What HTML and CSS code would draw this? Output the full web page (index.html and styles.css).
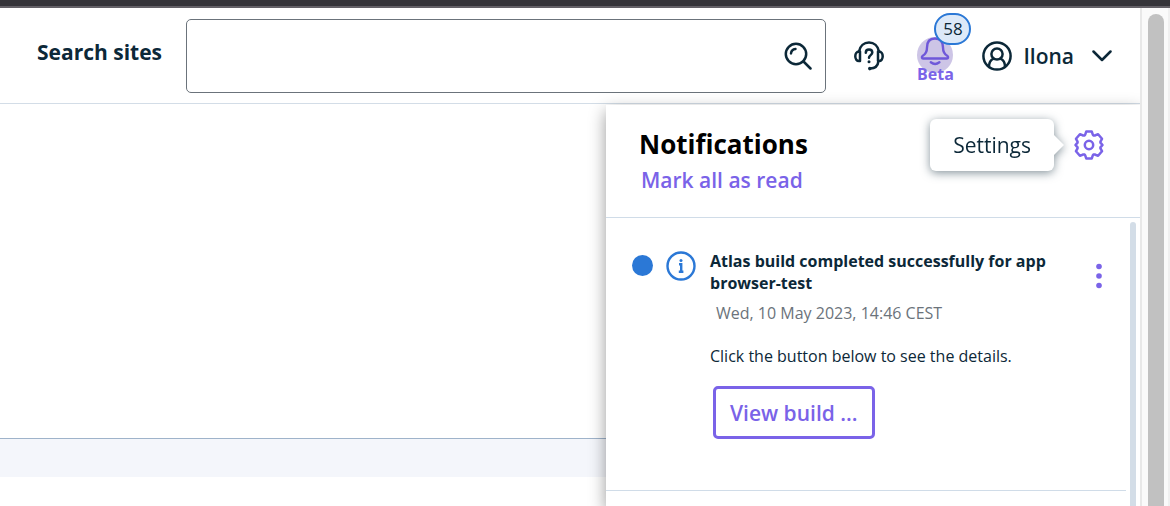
FILE: index.html
```html
<!DOCTYPE html>
<html lang="en">
<head>
<meta charset="utf-8">
<title>Notifications</title>
<link rel="stylesheet" href="styles.css">
</head>
<body>
<div class="chrome-bar"></div>
<div class="viewport">
  <div class="page">
    <header class="header">
      <label class="search-label" for="search">Search sites</label>
      <div class="search">
        <input class="search-input" id="search" type="text">
        <button class="icon-button" type="button" aria-label="Search">
          <svg class="icon" viewBox="0 0 28 28"><circle cx="12" cy="12" r="10.2"/><path d="M19.500 19.500 26.500 26.500M7 11.500a5 5 0 0 1 4.500-4.500"/></svg>
        </button>
      </div>
      <nav class="actions">
        <button class="icon-button" type="button" aria-label="Help">
          <svg class="icon help-icon" viewBox="0 0 30 30"><path d="M5 10.500C6 5 10 1.500 15 1.500s9 3.500 10 9"/><path d="M6 10.500v9.500H5c-2.300 0-3.700-2.100-3.700-4.700S2.700 10.500 5 10.500zM24 10.500v9.500h1c2.300 0 3.700-2.100 3.700-4.700S27.300 10.500 25 10.500zM24.500 20c-.6 4.800-3.700 7.500-8.300 7.500"/><path d="M11.800 11.800c0-2 1.300-3.200 3.200-3.200 2 0 3.300 1.200 3.300 3 0 2.500-3.300 2.600-3.300 5.200"/><circle class="solid" cx="15" cy="20.800" r="1.500"/><circle class="solid" cx="15.800" cy="27.600" r="1.800"/></svg>
        </button>
        <button class="bell" type="button" aria-label="Notifications, beta">
          <span class="bell-disc"><svg class="bell-icon" viewBox="0 0 36 36"><path d="M5.500 19C9 17 10 15 10 10.500 10 4.800 12.500 1.500 18 1.500S26 4.800 26 10.500c0 4.500 1 6.500 4.500 8.500 1 1 .6 2.500-.5 2.500H6c-1.100 0-1.500-1.500-.5-2.500zM13.800 25.300c2.500 1.900 6.100 1.900 8.600 0"/></svg></span>
          <span class="beta">Beta</span>
          <span class="count">58</span>
        </button>
        <button class="user" type="button">
          <svg class="icon user-icon" viewBox="0 0 30 30"><circle cx="15" cy="15" r="13.600"/><circle cx="15" cy="13" r="5.600"/><path d="M7 25.500c0-4 1.800-6.500 4.500-7.800M23 25.500c0-4-1.800-6.500-4.500-7.800"/></svg>
          <span>Ilona</span>
          <svg class="icon chevron" viewBox="0 0 20 12"><path d="M1.500 1.500 10 10l8.500-8.500"/></svg>
        </button>
      </nav>
    </header>
    <main class="content">
      <div class="band"></div>
      <section class="panel">
        <div class="panel-head">
          <div class="panel-titles">
            <h2 class="panel-title">Notifications</h2>
            <button class="mark-read" type="button">Mark all as read</button>
          </div>
          <div class="settings">
            <span class="tooltip" role="tooltip" id="settings-tip">Settings</span>
            <button class="icon-button" type="button" aria-labelledby="settings-tip">
              <svg class="icon gear" viewBox="0 0 30 30"><path d="M12.200 1.600h5.600l1 3c.3.900 1.200 1.200 2 .9l3.300-1.300 3.900 4.600-1.400 2.500c-.4.900-.2 1.600.5 2.100L28.500 15l-1.400 1.600c-.7.500-.9 1.200-.5 2.100l1.400 2.500-3.900 4.600-3.300-1.300c-.8-.3-1.700 0-2 .9l-1 3h-5.600l-1-3c-.3-.9-1.200-1.200-2-.9l-3.300 1.300L2 21.200l1.400-2.500c.4-.9.2-1.600-.5-2.100L1.500 15l1.400-1.600c.7-.5.9-1.200.5-2.100L2 8.800l3.900-4.600 3.300 1.300c.8.300 1.700 0 2-.9z"/><circle cx="15" cy="15" r="4.200"/></svg>
            </button>
          </div>
        </div>
        <div class="panel-body">
          <article class="notice">
            <span class="unread"></span>
            <svg class="info" viewBox="0 0 30 30"><circle cx="15" cy="15" r="13.500"/><path d="M13 13.200h2.200v7.300M12.800 20.800h4.600"/><circle class="dot" cx="15" cy="9.600" r="1.500"/></svg>
            <div class="notice-text">
              <h3 class="notice-title">Atlas build completed successfully for app browser-test</h3>
              <time class="notice-date">Wed, 10 May 2023, 14:46 CEST</time>
              <p class="notice-copy">Click the button below to see the details.</p>
              <button class="view" type="button">View build ...</button>
            </div>
            <button class="icon-button more" type="button" aria-label="More options">
              <svg class="more-icon" viewBox="0 0 6 26"><circle cx="3" cy="3.500" r="2.800"/><circle cx="3" cy="13" r="2.800"/><circle cx="3" cy="22.500" r="2.800"/></svg>
            </button>
          </article>
          <div class="panel-scroll"></div>
        </div>
      </section>
    </main>
  </div>
  <div class="scrollbar"><div class="thumb"></div></div>
</div>
</body>
</html>
```
FILE: styles.css
```css
* { box-sizing: border-box; }

body {
  margin: 0;
  height: 100vh;
  display: flex;
  flex-direction: column;
  overflow: hidden;
  background: #fff;
  color: #0c2838;
  font-family: "Open Sans", sans-serif;
  font-size: 16px;
}

button {
  padding: 0;
  border: 0;
  background: none;
  color: inherit;
  font: inherit;
  cursor: pointer;
}

h2, h3, p { margin: 0; }

svg { display: block; }

.chrome-bar {
  flex: none;
  height: 8px;
  background: #353439;
  border-bottom: 2px solid #646167;
}

.viewport { flex: 1; min-height: 0; display: flex; }

.page {
  flex: 1;
  min-width: 0;
  display: flex;
  flex-direction: column;
  overflow: hidden;
}

.header {
  flex: none;
  display: flex;
  align-items: center;
  height: 96px;
  padding: 0 28px 0 37px;
  border-bottom: 1px solid #d3dde7;
}

.search-label {
  width: 149px;
  padding-bottom: 8px;
  font-size: 21px;
  font-weight: 700;
  line-height: 30px;
}

.search {
  flex: 1;
  display: flex;
  align-items: center;
  height: 74px;
  padding-right: 13px;
  border: 1px solid #6b737b;
  border-radius: 5px;
}

.search-input {
  flex: 1;
  min-width: 0;
  height: 100%;
  padding: 0 16px;
  border: 0;
  outline: 0;
  background: none;
  font: inherit;
}

.icon-button { display: flex; }

.icon {
  width: 28px;
  height: 28px;
  fill: none;
  stroke: currentColor;
  stroke-width: 2.5;
  stroke-linecap: round;
  stroke-linejoin: round;
}

.help-icon, .user-icon, .gear { width: 30px; height: 30px; }
.icon .solid { fill: currentColor; stroke: none; }

.actions { display: flex; align-items: center; margin-left: 28px; }

.bell {
  position: relative;
  display: flex;
  flex-direction: column;
  align-items: center;
  width: 38px;
  margin: 10px 28px 0 32px;
  color: #7a63e8;
}

.bell-disc {
  width: 36px;
  height: 36px;
  border-radius: 50%;
  background: #cdc5e6;
}

.bell-icon {
  width: 36px;
  height: 36px;
  fill: none;
  stroke: #6f58d9;
  stroke-width: 2.4;
  stroke-linecap: round;
}

.beta {
  margin-top: -9px;
  font-size: 16px;
  font-weight: 700;
  line-height: 20px;
}

.count {
  position: absolute;
  top: -24px;
  left: 18px;
  width: 37px;
  height: 32px;
  border: 2px solid #2b78d6;
  border-radius: 16px;
  background: #dde9f8;
  color: #0c2838;
  font-size: 17px;
  line-height: 28px;
}

.user {
  display: flex;
  align-items: center;
  gap: 11px;
  font-size: 21px;
  font-weight: 600;
  line-height: 30px;
}

.chevron { width: 20px; height: 12px; margin-left: 7px; }

.content { position: relative; flex: 1; min-height: 0; }

.band {
  height: 39px;
  margin-top: 334px;
  border-top: 1px solid #9fb3ca;
  background: #f4f6fb;
}

.panel {
  position: absolute;
  top: 1px;
  right: 0;
  bottom: 0;
  width: 534px;
  display: flex;
  flex-direction: column;
  background: #fff;
  box-shadow: 0 6px 16px rgba(0, 0, 0, 0.4);
}

.panel-head {
  display: flex;
  justify-content: space-between;
  align-items: flex-start;
  height: 113px;
  padding: 13px 36px 0 33px;
  border-bottom: 1px solid #d0dce8;
}

.panel-titles { padding-top: 8px; }

.panel-title {
  color: #000;
  font-size: 26px;
  font-weight: 700;
  line-height: 36px;
}

.mark-read {
  padding-left: 2px;
  color: #7a63e8;
  font-size: 21px;
  font-weight: 600;
  line-height: 36px;
}

.settings {
  display: flex;
  align-items: center;
  gap: 20px;
  padding-top: 1px;
  color: #7a63e8;
}

.tooltip {
  position: relative;
  padding: 0 23px;
  border-radius: 6px;
  background: #fff;
  color: #0c2838;
  font-size: 21px;
  line-height: 52px;
  filter: drop-shadow(0 2px 5px rgba(12, 40, 56, 0.5));
}

.tooltip::after {
  content: "";
  position: absolute;
  top: 16px;
  left: 100%;
  border: 10px solid transparent;
  border-left-color: #fff;
  border-right-width: 0;
}

.panel-body { flex: 1; display: flex; align-items: flex-start; }

.notice {
  flex: 1;
  display: flex;
  align-items: flex-start;
  height: 273px;
  padding: 32px 24px 0 26px;
  border-bottom: 1px solid #d0dce8;
}

.unread {
  width: 21px;
  height: 21px;
  margin-top: 5px;
  border-radius: 50%;
  background: #2b78d6;
}

.info {
  width: 30px;
  height: 30px;
  margin: 1px 14px 0 13px;
  fill: none;
  stroke: #2b78d6;
  stroke-width: 2.4;
}

.info .dot { fill: #2b78d6; stroke: none; }

.notice-text {
  flex: 1;
  display: flex;
  flex-direction: column;
  align-items: flex-start;
}

.notice-title { font-size: 16px; font-weight: 700; line-height: 22px; }

.notice-date { margin: 8px 0 0 6px; color: #6b737b; line-height: 22px; }

.notice-copy { margin-top: 21px; line-height: 22px; }

.view {
  height: 53px;
  margin: 19px 0 0 3px;
  padding: 0 14px;
  border: 3px solid #7a63e8;
  border-radius: 5px;
  color: #7a63e8;
  font-size: 21px;
  font-weight: 600;
}

.more { margin-top: 13px; }
.more-icon { width: 6px; height: 26px; fill: #7a63e8; }

.panel-scroll {
  align-self: stretch;
  width: 6px;
  margin: 4px 4px 0;
  border-radius: 3px 3px 0 0;
  background: #d3dde7;
}

.scrollbar {
  flex: none;
  width: 30px;
  padding: 6px 4px 0 6px;
  border-left: 2px solid #e8e8e8;
  border-right: 2px solid #f0f0f0;
  background: #fafafa;
}

.thumb { height: 100%; border-radius: 8px 8px 0 0; background: #c1c1c1; }
```
